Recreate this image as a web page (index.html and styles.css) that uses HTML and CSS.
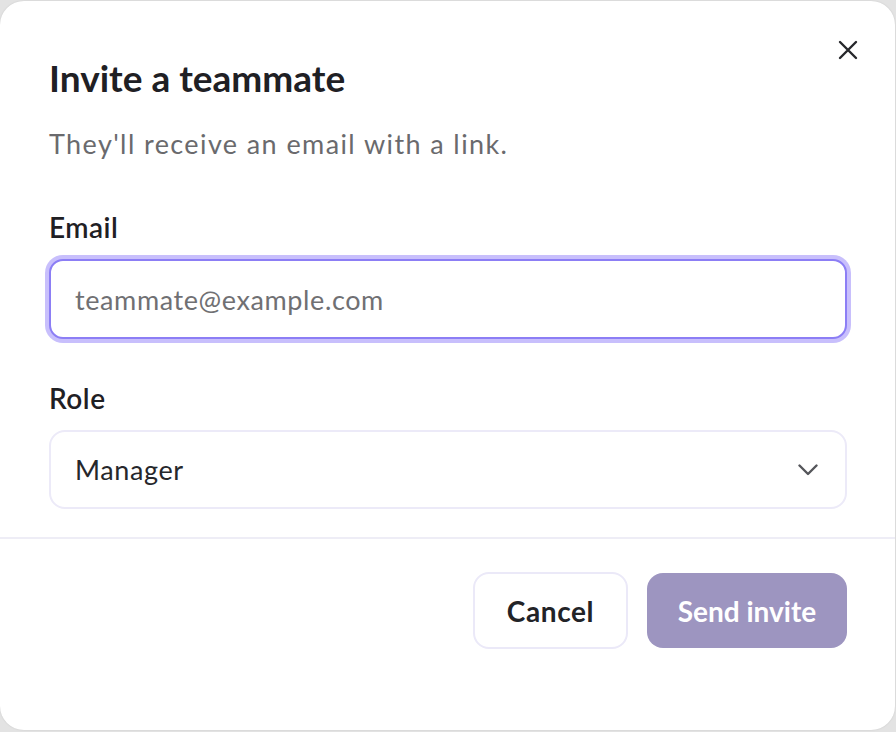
FILE: index.html
```html
<!DOCTYPE html>
<html lang="en">
<head>
    <meta charset="UTF-8">
    <meta name="viewport" content="width=device-width, initial-scale=1.0">
    <title>Invite a teammate</title>
    <link rel="stylesheet" href="styles.css">
</head>
<body>

    <div class="dialog">
        <button class="close" aria-label="Close">
            <svg width="20" height="20" viewBox="0 0 20 20">
                <path d="M2 2 L18 18 M18 2 L2 18" stroke="#26272b" stroke-width="2.4" stroke-linecap="round" fill="none"/>
            </svg>
        </button>

        <div class="dialog-body">
            <h2 class="title">Invite a teammate</h2>
            <p class="subtitle">They'll receive an email with a link.</p>

            <label class="label" for="email">Email</label>
            <input class="input" id="email" type="email" placeholder="teammate@example.com">

            <label class="label role-label">Role</label>
            <div class="select">
                <span>Manager</span>
                <svg width="20" height="12" viewBox="0 0 20 12">
                    <polyline points="1.5,1.5 10,10 18.5,1.5" stroke="#55565b" stroke-width="2.4" stroke-linecap="round" stroke-linejoin="round" fill="none"/>
                </svg>
            </div>
        </div>

        <div class="dialog-footer">
            <button class="btn btn-cancel">Cancel</button>
            <button class="btn btn-send">Send invite</button>
        </div>
    </div>

</body>
</html>
```

FILE: styles.css
```css
html, body {
    margin: 0;
    height: 100%;
}
body {
    font-family: Lato, "Noto Sans", sans-serif;
    background-color: #e3e3e3;
    overflow: hidden;
}
.dialog {
    position: relative;
    box-sizing: border-box;
    width: 895px;
    height: 729px;
    margin-top: 1px;
    background-color: #fff;
    border-radius: 24px;
    box-shadow: 0 0 2px rgba(0, 0, 0, 0.12);
}
.close {
    position: absolute;
    top: 39px;
    right: 37px;
    padding: 0;
    border: none;
    background: none;
    cursor: pointer;
    line-height: 0;
}
.dialog-body {
    padding: 55px 48px 28px 49px;
}
.title {
    margin: 0;
    font-size: 37px;
    line-height: 44px;
    font-weight: 700;
    color: #1f2024;
}
.subtitle {
    margin: 29px 0 0;
    font-size: 27px;
    line-height: 30px;
    letter-spacing: 1.4px;
    color: #6a6a6d;
}
.label {
    display: block;
    margin-top: 52px;
    font-size: 28px;
    line-height: 32px;
    font-weight: 600;
    letter-spacing: 0.5px;
    color: #1f2024;
}
.role-label {
    margin-top: 43px;
}
.input {
    display: block;
    box-sizing: border-box;
    width: 798px;
    height: 80px;
    margin-top: 16px;
    padding: 0 24px;
    border: 2px solid #8c7ef5;
    border-radius: 14px;
    box-shadow: 0 0 0 4px #c8bffc;
    font-family: inherit;
    font-size: 27px;
    letter-spacing: 0.6px;
    color: #1f2024;
    outline: none;
}
.input::placeholder {
    color: #707073;
}
.select {
    display: flex;
    align-items: center;
    justify-content: space-between;
    box-sizing: border-box;
    width: 798px;
    height: 79px;
    margin-top: 16px;
    padding: 0 27px 0 24px;
    border: 2px solid #eceaf8;
    border-radius: 16px;
    font-size: 27px;
    letter-spacing: 0.6px;
    color: #26272b;
}
.dialog-footer {
    display: flex;
    justify-content: flex-end;
    gap: 19px;
    padding: 33px 48px 0;
    border-top: 2px solid #eeedf6;
}
.btn {
    box-sizing: border-box;
    height: 77px;
    padding: 0;
    border-radius: 16px;
    font-family: inherit;
    font-size: 28px;
    font-weight: 700;
    cursor: pointer;
}
.btn-cancel {
    width: 155px;
    border: 2px solid #ebe9f8;
    background-color: #fff;
    color: #222327;
    letter-spacing: 0.6px;
}
.btn-send {
    width: 200px;
    height: 75px;
    margin-top: 1px;
    border: none;
    background-color: #9d95c0;
    color: #fff;
}
```
